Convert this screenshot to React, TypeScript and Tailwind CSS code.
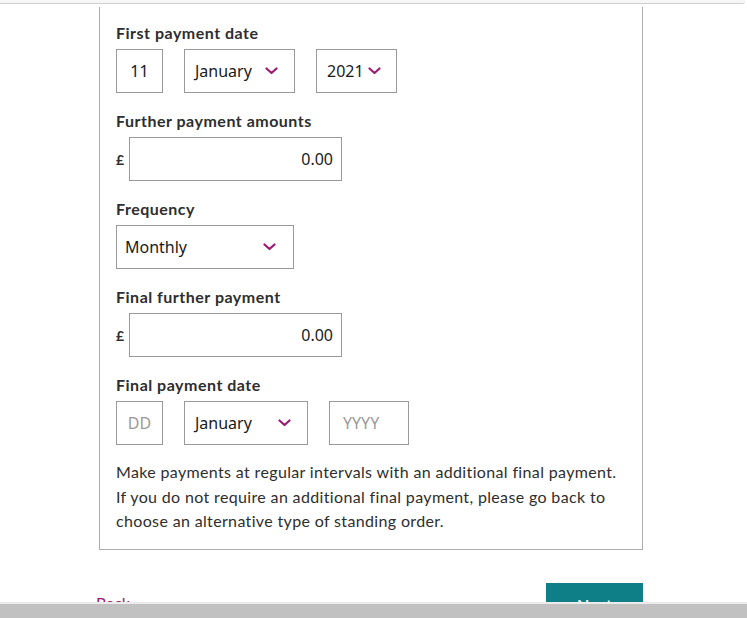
import { ReactNode } from 'react'

const labelFont = { fontFamily: 'Lato, "Noto Sans", sans-serif' }

function Chevron() {
  return (
    <svg width="13" height="8" viewBox="0 0 13 8" className="shrink-0">
      <path d="M1.5 1.5 L6.5 6 L11.5 1.5" fill="none" stroke="#9b1c72" strokeWidth="2.2" strokeLinecap="round" strokeLinejoin="round" />
    </svg>
  )
}

function Label({ children }: { children: ReactNode }) {
  return <div className="text-[16px] leading-[22px] font-bold tracking-[0.5px] text-[#2e2e2e] mb-[5px]">{children}</div>
}

function Field({ label, children }: { label: string; children: ReactNode }) {
  return (
    <div className="mb-[17px]">
      <Label>{label}</Label>
      {children}
    </div>
  )
}

function Select({ value, width, pl = 'pl-[10px]', pr = 'pr-[16px]' }: { value: string; width: string; pl?: string; pr?: string }) {
  return (
    <div className={`${width} ${pl} ${pr} h-[44px] border border-[#9a9a9a] flex items-center justify-between text-[16px] text-[#1a1a1a] font-input`}>
      <span>{value}</span>
      <Chevron />
    </div>
  )
}

function Amount() {
  return (
    <div className="flex items-center">
      <span className="w-[13px] text-[14px] font-bold text-[#2e2e2e]">£</span>
      <div className="w-[213px] h-[44px] border border-[#9a9a9a] flex items-center justify-end pr-[8px] text-[16px] text-[#1a1a1a] font-input">
        0.00
      </div>
    </div>
  )
}

export default function App() {
  return (
    <div className="relative h-[618px] overflow-hidden bg-white" style={labelFont}>
      <style>{`.font-input{font-family:"Noto Sans","Open Sans",sans-serif}`}</style>
      {/* top strip */}
      <div className="h-[4px] mr-[2px] bg-[#f7f7f7] border-b border-[#cfcfcf] rounded-br-[3px]" />

      <div className="ml-[99px] mt-[3px] w-[544px] border-x border-b border-[#acacac] pl-[16px] pr-[16px] pt-[15px] pb-[15px]">
        <Field label="First payment date">
          <div className="flex gap-[21px]">
            <div className="w-[47px] h-[44px] border border-[#9a9a9a] flex items-center justify-center text-[16px] text-[#1a1a1a] font-input">11</div>
            <Select value="January" width="w-[111px]" />
            <Select value="2021" width="w-[81px]" pr="pr-[15px]" />
          </div>
        </Field>

        <Field label="Further payment amounts">
          <Amount />
        </Field>

        <Field label="Frequency">
          <Select value="Monthly" width="w-[178px]" pl="pl-[8px]" pr="pr-[17px]" />
        </Field>

        <Field label="Final further payment">
          <Amount />
        </Field>

        <div>
          <Label>Final payment date</Label>
          <div className="flex gap-[21px]">
            <div className="w-[47px] h-[44px] border border-[#9a9a9a] flex items-center justify-center text-[16px] text-[#9a9a9a] font-input">DD</div>
            <Select value="January" width="w-[124px]" pr="pr-[16px]" />
            <div className="w-[80px] h-[44px] border border-[#9a9a9a] flex items-center pl-[13px] text-[16px] text-[#9a9a9a] font-input">YYYY</div>
          </div>
        </div>

        <p className="mt-[15px] text-[16px] leading-[24.5px] tracking-[0.35px] text-[#2e2e2e]">
          Make payments at regular intervals with an additional final payment.
          <br />
          If you do not require an additional final payment, please go back to
          <br />
          choose an alternative type of standing order.
        </p>
      </div>

      <div className="ml-[96px] mt-[33px] w-[547px] flex justify-between items-start">
        <span className="mt-[9px] text-[16px] leading-[22px] text-[#9b1c72]">Back</span>
        <button className="w-[97px] h-[44px] bg-[#0e7f86] text-white font-bold text-[16px]">Next</button>
      </div>

      {/* bottom scrollbar overlay */}
      <div className="absolute left-0 right-0 bottom-0 h-[16px] bg-[#c1c1c1] border-t-2 border-[#ececec]" />
    </div>
  )
}
